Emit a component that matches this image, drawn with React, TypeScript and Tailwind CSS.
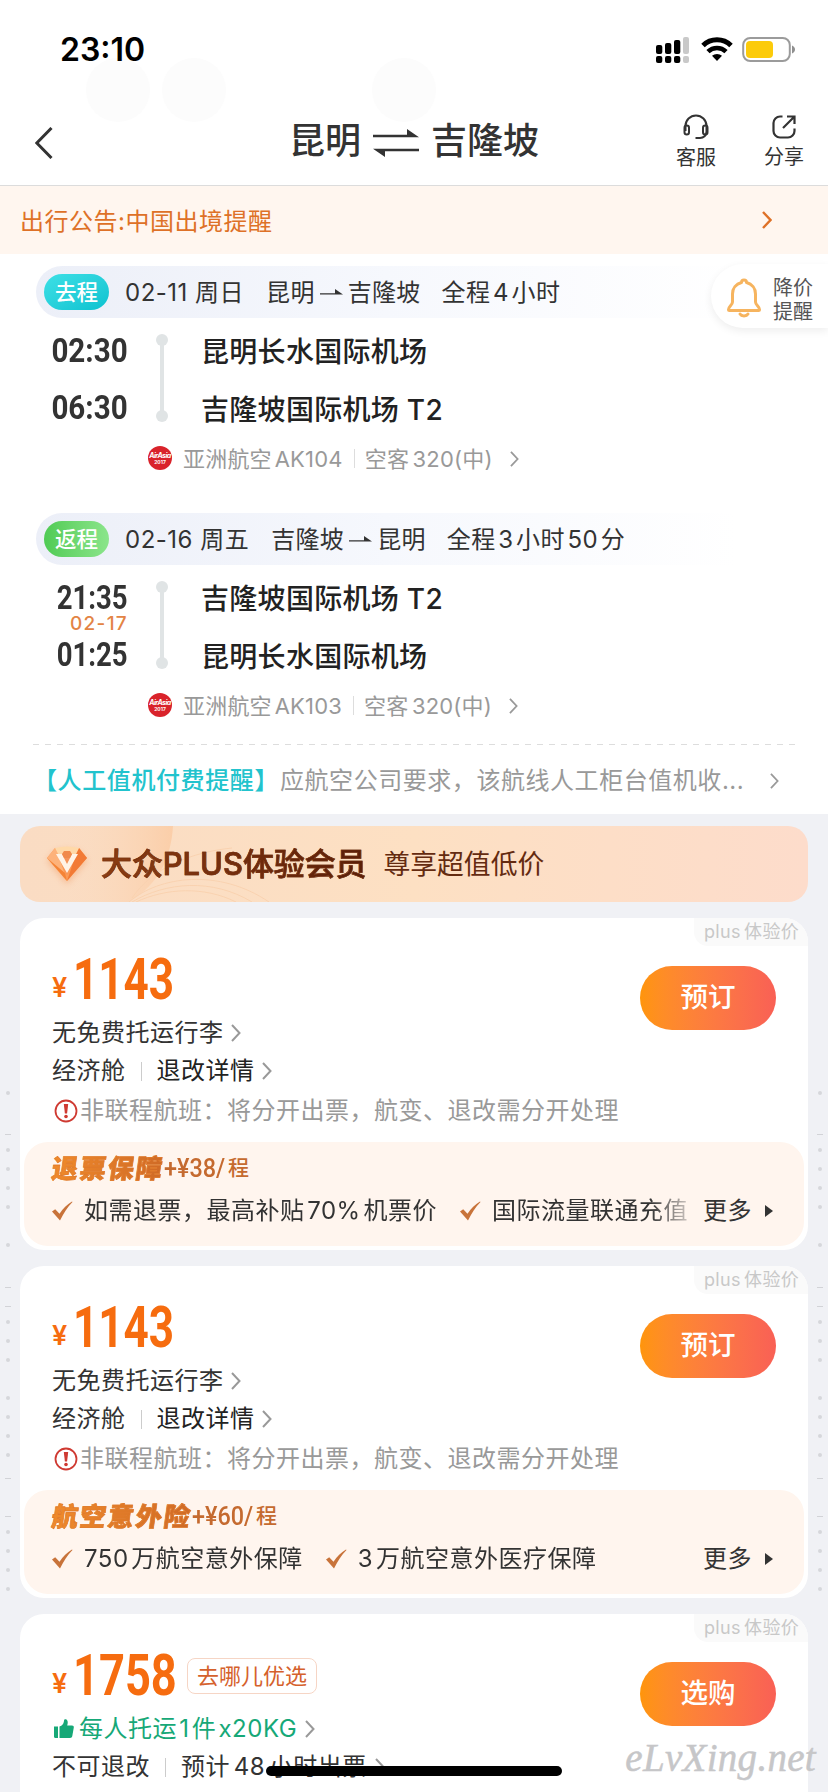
import React from 'react';

interface Leg {
  tag: string;
  tagClass: string;
  timeClass: string;
  date: string;
  from: string;
  to: string;
  duration: string;
  depart: string;
  arrive: string;
  nextDay?: string;
  departAirport: string;
  arriveAirport: string;
  flightNo: string;
}

const legs: Leg[] = [
  {
    tag: '去程',
    tagClass: 'bg-gradient-to-br from-[#3ce0e6] to-[#06c2d0]',
    timeClass: 'scale-x-[0.87]',
    date: '02-11 周日',
    from: '昆明',
    to: '吉隆坡',
    duration: '全程 4 小时',
    depart: '02:30',
    arrive: '06:30',
    departAirport: '昆明长水国际机场',
    arriveAirport: '吉隆坡国际机场 T2',
    flightNo: 'AK104',
  },
  {
    tag: '返程',
    tagClass: 'bg-gradient-to-r from-[#4fcb54] to-[#8be58b]',
    timeClass: 'scale-x-[0.81]',
    date: '02-16 周五',
    from: '吉隆坡',
    to: '昆明',
    duration: '全程 3 小时 50 分',
    depart: '21:35',
    arrive: '01:25',
    nextDay: '02-17',
    departAirport: '吉隆坡国际机场 T2',
    arriveAirport: '昆明长水国际机场',
    flightNo: 'AK103',
  },
];

const Chevron: React.FC<{ className?: string; width?: number }> = ({ className = '', width = 2 }) => (
  <svg viewBox="0 0 10 18" fill="none" stroke="currentColor" strokeWidth={width} className={className}>
    <path d="M1 1l7.5 8L1 17" />
  </svg>
);

const SmallArrow = () => (
  <svg viewBox="0 0 23 12" className="w-[23px] h-3 mx-[5px]" fill="#333">
    <path d="M0 6.2h15V2l8 5.6H0z" />
  </svg>
);

const StatusBar = () => (
  <div className="relative h-[100px] flex justify-between pl-[60px] pr-[32px]">
    <div className="absolute left-[86px] top-[58px] w-16 h-16 rounded-full bg-[#fcfcfc]" />
    <div className="absolute left-[162px] top-[58px] w-16 h-16 rounded-full bg-[#fcfcfc]" />
    <div className="absolute left-[372px] top-[58px] w-16 h-16 rounded-full bg-[#fcfcfc]" />
    <span className="relative mt-[30px] h-10 leading-10 text-[32px] font-semibold text-black">23:10</span>
    <div className="mt-[36px] flex h-7">
      <svg viewBox="0 0 33 27" className="w-[33px] h-[27px] mr-3">
        <rect x="0" y="9" width="6.3" height="9" rx="2" />
        <rect x="9" y="7" width="6.3" height="11" rx="2" />
        <rect x="18" y="4" width="6.3" height="14" rx="2" />
        <rect x="27" y="1" width="6" height="17" rx="2" fill="#c9c9c9" />
        <rect x="0" y="20" width="6.3" height="7" rx="2" />
        <rect x="9" y="20" width="6.3" height="7" rx="2" />
        <rect x="18" y="20" width="6.3" height="7" rx="2" />
        <rect x="27" y="20" width="6" height="7" rx="2" fill="#c9c9c9" />
      </svg>
      <svg viewBox="0 0 32 26" className="w-8 h-[26px] mr-[9px]" fill="none" stroke="#000">
        <path d="M2 9.5a20 20 0 0 1 28 0" strokeWidth="5" />
        <path d="M7 15.6a13 13 0 0 1 18 0" strokeWidth="4.6" />
        <path d="M11 19.8a7.6 7.6 0 0 1 10 0L16 25z" fill="#000" stroke="none" />
      </svg>
      <svg viewBox="0 0 54 27" className="w-[54px] h-[27px]">
        <rect x="1.2" y="2" width="46.6" height="23" rx="7" fill="none" stroke="#9b9b9b" strokeWidth="2" />
        <rect x="4" y="5" width="27" height="17" rx="4" fill="#fccb0a" />
        <path d="M50 9.5c4 1.4 4 6.6 0 8z" fill="#8f8f8f" />
      </svg>
    </div>
  </div>
);

const Header = () => (
  <header className="h-[86px] grid grid-cols-[1fr_auto_1fr] border-b border-[#dcdcdc] text-[#333]">
    <svg viewBox="0 0 18 32" className="w-[18px] h-8 ml-[35px] mt-[27px]" fill="none" stroke="#333" strokeWidth="3">
      <path d="M16.5 1L1.8 16l14.7 15" />
    </svg>
    <h1 className="mt-px h-20 flex items-center text-[36px] font-medium leading-none">
      昆明
      <svg viewBox="0 0 46 28" className="w-[46px] h-7 mx-[12px] mt-[3px]" fill="#333">
        <path d="M0 5.8h34V0l12 8.2H0z" />
        <path d="M46 22.2H12V28L0 19.8h46z" />
      </svg>
      吉隆坡
    </h1>
    <div className="flex justify-end pt-[14px] text-[20px] leading-6">
      <div className="flex flex-col items-center w-[42px] mr-[46px]">
        <svg viewBox="0 0 26 26" className="w-[26px] h-[26px] mb-[6px]" fill="none" stroke="#333" strokeWidth="2">
          <path d="M2.5 17v-5a10.500 10.500 0 0 1 21 0v5.500c0 4-3 6.500-6.500 6.500h-4.500" />
          <rect x="1.5" y="11.5" width="4.5" height="9" rx="2.25" />
          <rect x="20" y="11.5" width="4.5" height="9" rx="2.25" />
        </svg>
        客服
      </div>
      <div className="flex flex-col items-center w-[42px] mr-[23px]">
        <svg viewBox="0 0 26 26" className="w-[26px] h-[26px] mb-[5px]" fill="none" stroke="#333" strokeWidth="2.2">
          <path d="M11.5 2.5H9A6.5 6.5 0 0 0 2.5 9v8A6.5 6.5 0 0 0 9 23.5h8a6.5 6.5 0 0 0 6.5-6.5v-2.5" />
          <path d="M12 14L23 3M16 2.5h7.500V10" />
        </svg>
        分享
      </div>
    </div>
  </header>
);

const FlightLeg: React.FC<{ leg: Leg }> = ({ leg }) => (
  <div>
    <div className="ml-9 w-[700px] h-[52px] rounded-l-full bg-gradient-to-r from-[#eceff8] via-[#f6f8fd] to-white flex items-center pl-2 text-[24px] leading-[38px] text-[#333]">
      <span className={`w-[65px] h-9 rounded-full text-white text-[21.5px] leading-[36px] text-center font-medium ${leg.tagClass}`}>
        {leg.tag}
      </span>
      <span className="mt-[2px] ml-[16px] tracking-[0.5px]">{leg.date}</span>
      <span className="mt-[2px] ml-[22px] flex items-center tracking-[0.3px]">
        {leg.from}
        <SmallArrow />
        {leg.to}
      </span>
      <span className="mt-[2px] ml-[21px] tracking-[0.4px] [word-spacing:-4.5px]">{leg.duration}</span>
    </div>
    <div className="relative flex pt-1 h-[118px]">
      <div className="w-[127.5px] flex flex-col items-end font-['Roboto'] font-bold text-[34px] text-[#333]">
        <span className={`h-[57px] leading-[57px] origin-right ${leg.timeClass}`}>{leg.depart}</span>
        <span className={`h-[57px] leading-[57px] origin-right ${leg.timeClass}`}>{leg.arrive}</span>
      </div>
      {leg.nextDay && (
        <span className="absolute right-[700px] top-[49px] text-[19px] leading-5 font-medium tracking-[1.3px] text-[#e38445]">
          {leg.nextDay}
        </span>
      )}
      <div className="ml-[28.5px] mt-3 h-[88px] w-3 flex flex-col items-center">
        <i className="w-3 h-3 rounded-full bg-[#e0e4e5]" />
        <i className="w-1 flex-1 -my-1 bg-[#e0e4e5]" />
        <i className="w-3 h-3 rounded-full bg-[#e0e4e5]" />
      </div>
      <div className="ml-[33px] flex flex-col text-[28px] font-medium tracking-[0.3px] text-[#222]">
        <span className="h-[57px] leading-[61px]">{leg.departAirport}</span>
        <span className="h-[57px] leading-[62px]">{leg.arriveAirport}</span>
      </div>
    </div>
    <div className="h-11 flex items-center pl-[148px] text-[22px] text-[#999]">
      <span className="w-6 h-6 rounded-full bg-[#d9232b] text-white flex flex-col items-center justify-center italic">
        <b className="text-[7px] leading-[7px] tracking-[-0.5px]">AirAsia</b>
        <b className="text-[5px] leading-[6px] not-italic">2017</b>
      </span>
      <span className="mt-[2px] ml-[11px] tracking-[0.2px] [word-spacing:-3.5px]">亚洲航空 {leg.flightNo}</span>
      <i className="w-px h-[19px] bg-[#ddd] ml-[11px] mr-[10px]" />
      <span className="mt-[2px] tracking-[0.2px] [word-spacing:-3px]">空客 320(中)</span>
      <Chevron className="w-[9px] h-4 ml-[17px] mt-[2px]" />
    </div>
  </div>
);

const Bell = () => (
  <svg viewBox="0 0 34 40" className="w-[34px] h-10 mt-[3px]" fill="none" stroke="#f6b45f" strokeWidth="3" strokeLinejoin="round" strokeLinecap="round">
    <path d="M14.5 4.5a2.5 2.5 0 0 1 5 0C25 6 28.5 10.5 28.5 16v8c0 3 4 4.500 4 7.500 0 .8-.5 1-1 1h-29c-.5 0-1-.2-1-1 0-3 4-4.500 4-7.500v-8C5.500 10.500 9 6 14.500 4.500z" />
    <path d="M13 36c1.500 2.500 6.500 2.500 8 0" />
  </svg>
);

const Diamond = () => (
  <svg viewBox="0 0 42 36" className="w-[42px] h-9 drop-shadow-[0_3px_3px_rgba(240,130,60,0.35)]">
    <path d="M9 2h24l8 10-20 23L1 12z" fill="#fb9a55" />
    <path d="M9 2L1 12l20 23L12 8z" fill="#fdb27a" />
    <path d="M33 2l8 10-20 23 9-27z" fill="#f27a35" />
    <path d="M9 2c8-2 16-2 24 0l-3 6H12z" fill="#ffd9a8" />
    <path d="M11 8h20L21 29z" fill="#f4935a" />
    <path d="M10 8h6l5 10 5-10h6L21 27z" fill="#fff3e6" />
    <path d="M16 8l2-3h6l2 3-2 4h-6z" fill="#f08a4c" />
    <path d="M1 12l20 23-2-8z" fill="#f58335" />
  </svg>
);

const PlusBanner = () => (
  <div className="relative overflow-hidden shrink-0 mx-5 h-[76px] rounded-[20px] bg-gradient-to-r from-[#fadcc3] via-[#fde0c3] to-[#fddccb] flex items-center pl-[26px]">
    <svg viewBox="0 0 788 76" className="absolute inset-0 w-full h-full" fill="none">
      <defs>
        <linearGradient id="petal" x1="0" x2="1">
          <stop offset="0.3" stopColor="#fad8bd" stopOpacity="0" />
          <stop offset="1" stopColor="#fbc9a0" stopOpacity="0.75" />
        </linearGradient>
      </defs>
      <path d="M0 0h153c-2 32-14 58-44 76H0z" fill="url(#petal)" />
      <path d="M109 76c30-26 90-34 140 0M112 76c34-20 80-24 120 0M116 76c30-14 68-16 100 0M112 72c20-30 60-46 100-50" stroke="#f9d2b0" strokeWidth="1" />
    </svg>
    <div className="relative flex items-center">
      <Diamond />
      <span className="ml-[13px] text-[30.9px] font-medium bg-gradient-to-r from-[#8c3d12] to-[#5a1e08] bg-clip-text text-transparent [-webkit-text-stroke:0.6px_#75300f]">
        大众PLUS体验会员
      </span>
      <span className="ml-[17px] text-[26.8px] text-[#642b10]">尊享超值低价</span>
    </div>
  </div>
);

const Check = () => (
  <svg viewBox="0 0 21 20" className="w-[21px] h-5 shrink-0">
    <path d="M0 10.5l3.200-2.300 4.300 4.600C11 7.500 15 3.500 20 .5L20.500 1C15 6.500 11.500 12.500 8 19.500z" fill="#c8733a" />
  </svg>
);

interface CardProps {
  price: string;
  priceClass: string;
  action: string;
  children: React.ReactNode;
  badge?: string;
}

const FareCard: React.FC<CardProps> = ({ price, priceClass, action, children, badge }) => (
  <section className="relative shrink-0 mx-5 pt-[31px] rounded-[24px] bg-white overflow-hidden">
    <div className="absolute right-0 top-0 w-[114px] h-7 rounded-bl-[14px] bg-[#fafafa] text-[18px] leading-[28px] text-[#c8c8c8] pl-[10px] tracking-[0.3px] [word-spacing:-2px] whitespace-nowrap">
      plus 体验价
    </div>
    <div className="flex justify-between h-[60px] px-8">
      <div className="h-[60px] flex items-center text-[#f66c0f]">
        <span className="mt-[17px] w-[21px] text-[27px] leading-10 font-semibold">¥</span>
        <span className="w-[104px] font-['Roboto'] font-bold text-[58px] leading-[60px]">
          <span className={`inline-block origin-left ${priceClass}`}>{price}</span>
        </span>
        {badge && (
          <span className="ml-[10px] mt-[1px] h-9 px-[9px] rounded-lg border border-[#f6d5c5] text-[22px] leading-[35px] text-[#d5612c]">
            {badge}
          </span>
        )}
      </div>
      <button className="mt-[17px] w-[136px] h-16 rounded-full bg-gradient-to-r from-[#ff9509] to-[#f96055] text-white text-[27.5px] font-medium">
        {action}
      </button>
    </div>
    <div className="mt-[5px] pl-8 text-[24px] tracking-[0.5px] text-[#333]">{children}</div>
  </section>
);

const StandardFare = () => (
  <>
    <div className="h-[38px] flex items-center">
      无免费托运行李
      <Chevron className="w-[10px] h-[18px] ml-[7px] text-[#999]" />
    </div>
    <div className="h-[38px] flex items-center">
      经济舱
      <i className="w-px h-[19px] bg-[#ccc] mx-[15px]" />
      <span className="text-[#222]">退改详情</span>
      <Chevron className="w-[10px] h-[18px] ml-[7px] text-[#999]" />
    </div>
    <div className="h-[42px] flex items-center text-[#999]">
      <svg viewBox="0 0 24 24" className="w-6 h-6 ml-[2px] mr-[2px]">
        <circle cx="12" cy="12" r="10.5" fill="none" stroke="#cf3a32" strokeWidth="1.8" />
        <path d="M9.8 5h4.400l-1.100 9.500h-2.200z" fill="#cf3a32" />
        <circle cx="12" cy="17.5" r="1.8" fill="#cf3a32" />
      </svg>
      非联程航班：将分开出票，航变、退改需分开处理
    </div>
  </>
);

interface PerkProps {
  title: string;
  price: string;
  perks: string[];
}

const PerkPanel: React.FC<PerkProps> = ({ title, price, perks }) => (
  <div className="-ml-7 mt-[10px] mr-1 mb-1 h-[104px] rounded-[24px] bg-[#fff5ee] pt-2 pl-7">
    <div className="h-9 flex items-center">
      <span className="-skew-x-[8deg] text-[26px] font-black tracking-[2px] bg-gradient-to-r from-[#f08a2a] to-[#cf6a26] bg-clip-text text-transparent [-webkit-text-stroke:0.6px_#e07a2a]">
        {title}
      </span>
      <span className="w-[64px] whitespace-nowrap font-['Roboto'] font-medium text-[26px] text-[#c56a2f] tracking-normal">
        <span className="inline-block origin-left scale-x-[0.9]">+¥{price}/</span>
      </span>
      <span className="text-[21px] font-medium text-[#c56a2f]">程</span>
    </div>
    <div className="mt-[7px] h-9 flex items-center">
      <div className="w-[636px] flex items-center overflow-hidden whitespace-nowrap [mask-image:linear-gradient(to_right,#000_94%,transparent_102%)]">
        {perks.map((perk) => (
          <span key={perk} className="flex items-center mr-[23px]">
            <Check />
            <span className="ml-[11px] [word-spacing:-4.5px]">{perk}</span>
          </span>
        ))}
      </div>
      <span className="ml-[15px]">更多</span>
      <svg viewBox="0 0 8 12" className="w-2 h-3 ml-[13px]" fill="#333">
        <path d="M0 0l8 6-8 6z" />
      </svg>
    </div>
  </div>
);

// one character per 19px step, a blank leaves a gap
const marks = '* -**** * --*** ****- -****';

const SideMarks: React.FC<{ className: string }> = ({ className }) => (
  <div className={`absolute top-[269px] flex flex-col items-center w-3 ${className}`}>
    {marks.split('').map((m, i) => (
      <span key={i} className="h-[19.1px] flex items-center">
        {m === '*' && <i className="w-1 h-1 rounded-full bg-[#d6d7db]" />}
        {m === '-' && <i className="w-[6px] h-px mt-2 bg-[#d2d3d7]" />}
      </span>
    ))}
  </div>
);

export default function App() {
  return (
    <div className="relative w-[828px] h-[1792px] overflow-hidden bg-white font-['Inter','Noto_Sans_CJK_SC',sans-serif]">
      <StatusBar />
      <Header />
      <div className="h-[68px] bg-[#fff6ef] flex items-center justify-between pl-5 pr-14 text-[24px] text-[#de7127]">
        <span className="mt-[3px] tracking-[0.5px]">出行公告:中国出境提醒</span>
        <Chevron className="w-[10px] h-[18px]" width={2.4} />
      </div>

      <div className="relative pt-3">
        <FlightLeg leg={legs[0]} />
        <div className="h-[33px]" />
        <FlightLeg leg={legs[1]} />
        <div className="absolute right-0 top-[10px] w-[117px] h-16 rounded-l-full bg-white shadow-[0_3px_8px_rgba(0,0,0,0.07)] flex items-center pl-4 text-[20px] leading-[24px] text-[#555]">
          <Bell />
          <span className="ml-3 mt-[8px] w-10">降价提醒</span>
        </div>
      </div>

      <div className="mx-[33px] mt-[17px] h-px bg-[repeating-linear-gradient(to_right,#ddd_0,#ddd_6px,transparent_6px,transparent_12px)]" />
      <div className="h-[69px] flex items-center pt-[2px] pl-[33px] text-[24px] tracking-[0.5px]">
        <span className="font-medium tracking-[0.6px] text-[#22c3cd]">【人工值机付费提醒】</span>
        <span className="ml-px text-[#999] tracking-[0.55px]">应航空公司要求，该航线人工柜台值机收...</span>
        <Chevron className="w-[9px] h-4 ml-[26px] text-[#999]" />
      </div>

      <main className="relative h-[978px] bg-[#f0f1f5] pt-3 flex flex-col">
        <SideMarks className="left-[2px]" />
        <SideMarks className="right-[2px]" />
        <PlusBanner />
        <div className="mt-4 flex flex-col gap-4">
          <FareCard price="1143" priceClass="scale-x-[0.76]" action="预订">
            <StandardFare />
            <PerkPanel
              title="退票保障"
              price="38"
              perks={['如需退票，最高补贴 70% 机票价', '国际流量联通充值']}
            />
          </FareCard>
          <FareCard price="1143" priceClass="scale-x-[0.76]" action="预订">
            <StandardFare />
            <PerkPanel
              title="航空意外险"
              price="60"
              perks={['750 万航空意外保障', '3 万航空意外医疗保障']}
            />
          </FareCard>
          <FareCard price="1758" priceClass="scale-x-[0.78]" action="选购" badge="去哪儿优选">
            <div className="h-[38px] flex items-center text-[#16a877]">
              <svg viewBox="0 0 20 20" className="w-5 h-5 ml-[2px] mr-[5px]" fill="#16a877">
                <path d="M0 7.5h4V19H1.200C.5 19 0 18.500 0 17.800zM5.500 7.500C9 6.500 9.800 4 10 1.500 10.200.2 11 0 11.800.2c2.200.6 2.400 3.800 1.400 6.300H18c1.300 0 2 .9 1.800 2.100l-1.500 8.400c-.2 1.200-1 2-2.300 2H5.500z" />
              </svg>
              <span className="[word-spacing:-5px]">每人托运 1 件 x20KG</span>
              <Chevron className="w-[10px] h-[18px] ml-2 text-[#999]" />
            </div>
            <div className="h-[38px] flex items-center">
              不可退改
              <i className="w-px h-[19px] bg-[#ccc] mx-[15px]" />
              <span className="[word-spacing:-3.5px]">预计 48 小时出票</span>
              <Chevron className="w-[10px] h-[18px] ml-2 text-[#999]" />
            </div>
            <div className="h-10" />
          </FareCard>
        </div>
      </main>

      <div className="absolute left-[266px] bottom-4 w-[296px] h-[10px] rounded-full bg-black" />
      <div className="absolute right-[12px] bottom-[10px] font-['Liberation_Serif',serif] italic text-[39px] leading-[48px] tracking-[0.3px] text-[#c6c6c8] [-webkit-text-stroke:0.5px_#c6c6c8]">
        eLvXing.net
      </div>
    </div>
  );
}
